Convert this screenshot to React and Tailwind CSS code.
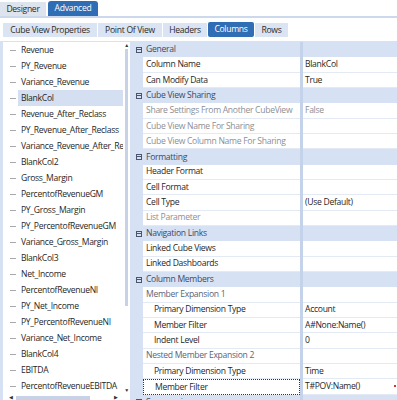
import React from 'react';

const LIST_ITEMS = [
  'Revenue', 'PY_Revenue', 'Variance_Revenue', 'BlankCol', 'Revenue_After_Reclass',
  'PY_Revenue_After_Reclass', 'Variance_Revenue_After_Reclass', 'BlankCol2', 'Gross_Margin',
  'PercentofRevenueGM', 'PY_Gross_Margin', 'PY_PercentofRevenueGM', 'Variance_Gross_Margin',
  'BlankCol3', 'Net_Income', 'PercentofRevenueNI', 'PY_Net_Income', 'PY_PercentofRevenueNI',
  'Variance_Net_Income', 'BlankCol4', 'EBITDA', 'PercentofRevenueEBITDA',
];

const PROPS = [
  { type: 'cat', label: 'General' },
  { label: 'Column Name', value: 'BlankCol' },
  { label: 'Can Modify Data', value: 'True' },
  { type: 'cat', label: 'Cube View Sharing' },
  { label: 'Share Settings From Another CubeView', value: 'False', dim: true },
  { label: 'Cube View Name For Sharing', dim: true },
  { label: 'Cube View Column Name For Sharing', dim: true },
  { type: 'cat', label: 'Formatting' },
  { label: 'Header Format' },
  { label: 'Cell Format' },
  { label: 'Cell Type', value: '(Use Default)' },
  { label: 'List Parameter', dim: true },
  { type: 'cat', label: 'Navigation Links' },
  { label: 'Linked Cube Views' },
  { label: 'Linked Dashboards' },
  { type: 'cat', label: 'Column Members' },
  { type: 'sub', label: 'Member Expansion 1' },
  { label: 'Primary Dimension Type', value: 'Account', indent: true },
  { label: 'Member Filter', value: 'A#None:Name()', indent: true },
  { label: 'Indent Level', value: '0', indent: true },
  { type: 'sub', label: 'Nested Member Expansion 2' },
  { label: 'Primary Dimension Type', value: 'Time', indent: true },
  { label: 'Member Filter', value: 'T#POV:Name()', indent: true, focus: true },
  { type: 'cat', label: 'Suppression' },
];

const SUB_TABS = [
  { label: 'Cube View Properties', w: 'w-[94px]' },
  { label: 'Point Of View', w: 'w-[64px]' },
  { label: 'Headers', w: 'w-[44px]' },
  { label: 'Columns', w: 'w-[46px]', active: true },
  { label: 'Rows', w: 'w-[33px]' },
];

const Collapse = () => (
  <span className="w-[6px] h-[6px] border border-[#4a5670] flex items-center justify-center shrink-0">
    <span className="w-[4px] h-px bg-[#4a5670]" />
  </span>
);

const PropRow = ({ row }) => {
  if (row.type === 'cat') {
    return (
      <div className="h-[15.33px] shrink-0 flex items-center">
        <div className="w-[170px] flex items-center pl-[6px] gap-[4px] text-[#3b4a66]">
          <Collapse />
          <span>{row.label}</span>
        </div>
        <div className="w-[3px] self-stretch bg-[#c5d3ea]" />
        <div className="flex-1" />
      </div>
    );
  }
  const nameColor = row.type === 'sub' ? 'text-[#56647c]' : row.dim ? 'text-[#8b8f96]' : 'text-[#1f1f1f]';
  const frame = row.focus ? 'border border-dotted border-[#333]' : 'border-b border-[#e4eaf4]';
  return (
    <div className="h-[15.33px] shrink-0 flex">
      <div className="w-[13px]" />
      <div className={`w-[157px] bg-white ${frame} flex items-center ${row.indent ? 'pl-[11px]' : 'pl-[3px]'} ${nameColor} whitespace-nowrap overflow-hidden`}>
        {row.label}
      </div>
      <div className="w-[3px] bg-[#c5d3ea]" />
      <div className={`flex-1 bg-white border-b border-[#e4eaf4] flex items-center pl-[2px] ${row.dim ? 'text-[#8b8f96]' : 'text-[#1f1f1f]'} relative`}>
        {row.value}
        {row.focus && <span className="absolute right-[1px] top-[6px] w-[2px] h-[2px] bg-[#e0302a]" />}
      </div>
    </div>
  );
};

export default function App() {
  return (
    <div className="w-[397px] h-[400px] bg-white overflow-hidden font-['Open_Sans',sans-serif] text-[8.6px] tracking-[-0.3px] leading-none">
      {/* Designer / Advanced */}
      <div className="h-[18px] flex items-end gap-[2px] border-b-2 border-[#ccd9ec]">
        <div className="w-[46px] h-[14px] bg-[#dde4ee] flex items-center justify-center text-[#2b2b2b]">Designer</div>
        <div className="w-[50px] h-[15px] bg-[#2f6db4] rounded-t-[3px] flex items-center justify-center text-white">Advanced</div>
      </div>

      {/* Sub tabs */}
      <div className="h-[19px] mt-[4px] flex items-start pl-[3px] gap-[1px]">
        {SUB_TABS.map(t => (
          <div
            key={t.label}
            className={`${t.w} flex items-center justify-center ${t.active ? 'h-[15px] bg-[#2f6db4] text-white rounded-[2px]' : 'h-[14px] mt-[1px] bg-[#dae4f3] text-[#2b2b2b]'}`}
          >
            {t.label}
          </div>
        ))}
      </div>

      {/* Content */}
      <div className="h-[360px] flex bg-[#d6e1f3]">
        {/* Column list */}
        <div className="w-[130px] shrink-0 pl-[3px] pt-[1px] flex">
          <div className="flex-1 min-w-0 bg-white flex flex-col overflow-hidden">
            <div className="flex flex-1 min-h-0">
              <div className="flex-1 min-w-0 flex flex-col overflow-hidden">
                {LIST_ITEMS.map(item => (
                  <div key={item} className="h-[16px] flex items-center shrink-0">
                    <span className="ml-[7px] w-[6px] h-px bg-[#a9a9a9] shrink-0" />
                    <span className={`ml-[2px] h-full flex-1 min-w-0 flex items-center pl-[3px] whitespace-nowrap overflow-hidden text-[#1f1f1f] ${item === 'BlankCol' ? 'bg-[#d4dff2]' : ''}`}>
                      {item}
                    </span>
                  </div>
                ))}
              </div>
              {/* vertical scrollbar */}
              <div className="w-[7px] shrink-0 flex flex-col items-center pt-[1px]">
                <span className="text-[5px] text-[#333] leading-none">▲</span>
                <span className="mt-[1px] w-[3px] h-[257px] bg-[#c7d2e6]" />
                <span className="flex-1" />
                <span className="text-[5px] text-[#333] leading-none mb-[1px]">▼</span>
              </div>
            </div>
            {/* horizontal scrollbar */}
            <div className="h-[7px] shrink-0 flex items-center pl-[6px] pr-[12px]">
              <span className="text-[5px] text-[#333]">◀</span>
              <span className="ml-[3px] w-[74px] h-[4px] bg-[#c7d2e6]" />
              <span className="flex-1" />
              <span className="text-[5px] text-[#333]">▶</span>
            </div>
          </div>
        </div>

        {/* Property grid */}
        <div className="flex-1 min-w-0 pt-[1px] flex flex-col overflow-hidden">
          {PROPS.map((row, i) => (
            <PropRow key={i} row={row} />
          ))}
        </div>
      </div>
    </div>
  );
}
